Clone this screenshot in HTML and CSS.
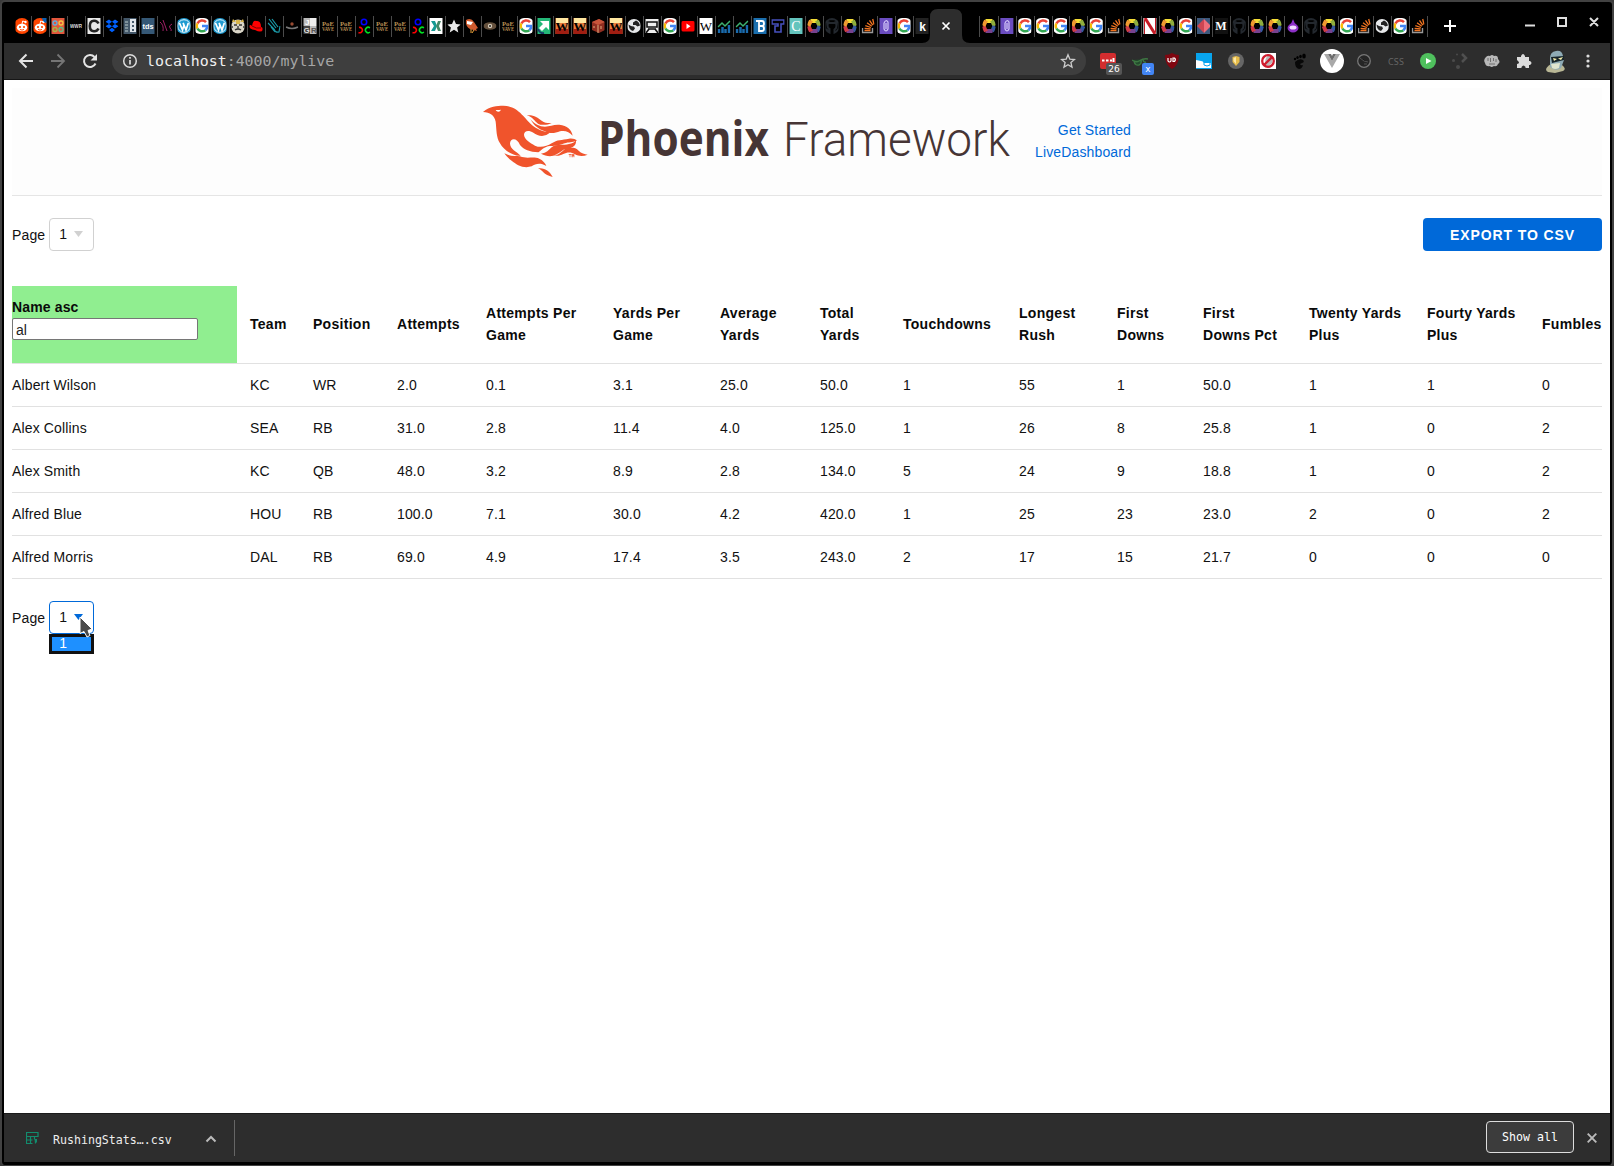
FILE: index.html
```html
<!DOCTYPE html>
<html lang="en">
<head>
<meta charset="utf-8">
<title>MyLive · Phoenix Framework</title>
<link rel="stylesheet" href="styles.css">
</head>
<body>
<svg class="defs" width="0" height="0" aria-hidden="true">
  <defs>
    <symbol id="reddit" viewBox="0 0 16 16"><circle cx="8" cy="8" r="8" fill="#ff4500"/><ellipse cx="8" cy="9.500" rx="5.200" ry="3.800" fill="#fff"/><circle cx="11.500" cy="4" r="1.200" fill="#fff"/><path d="M8 6l.7-3 2.800 1" stroke="#fff" fill="none"/><circle cx="6" cy="9" r="1.100" fill="#ff4500"/><circle cx="10" cy="9" r="1.100" fill="#ff4500"/><path d="M6 11.500q2 1.200 4 0" stroke="#ff4500" fill="none"/></symbol>
    <symbol id="reddit2" viewBox="0 0 16 16"><use href="#reddit"/><path d="M10 0h5v5q-4 0-5-5" fill="#0b5fb0"/></symbol>
    <symbol id="grid" viewBox="0 0 16 16"><path fill="#e2563c" d="M0 0h16v16H0z"/><circle cx="5" cy="5" r="2" fill="none" stroke="#5fb0e0" stroke-width="1.300"/><circle cx="11" cy="5" r="2" fill="none" stroke="#f5c542" stroke-width="1.300"/><circle cx="5" cy="11.500" r="2" fill="none" stroke="#a5b84a" stroke-width="1.300"/><circle cx="11" cy="11.500" r="2" fill="none" stroke="#5ac08a" stroke-width="1.300"/></symbol>
    <symbol id="wwr" viewBox="0 0 16 16"><text x="8" y="10" font-size="6" font-weight="bold" text-anchor="middle" textLength="12" lengthAdjust="spacingAndGlyphs" fill="#ddd">WWR</text></symbol>
    <symbol id="cbox" viewBox="0 0 16 16"><path fill="#e8e8e8" d="M0 0h16v16H0z"/><path d="M12.500 5.500Q11 2.500 8 2.700 3.800 3 3.800 8t4.200 5.300q3 .2 4.500-2.800" fill="none" stroke="#222" stroke-width="2.600"/></symbol>
    <symbol id="dropbox" viewBox="0 0 16 16"><path fill="#0061ff" d="M5 1.500l3 2.200-3 2.300-3.500-2.300zM11 1.500l3.500 2.200L11 6 8 3.700zM5 6l3 2.300-3 2.200L1.500 8.300zM11 6l3.500 2.300-3.500 2.200-3-2.200zM8 9.700l3 2.200-3 2.300-3-2.300z"/></symbol>
    <symbol id="cols" viewBox="0 0 16 16"><path fill="#44586a" d="M0 0h16v16H0z"/><path fill="#dfe5ea" d="M8 1h6v13H8z"/><path d="M3 4h3M3 7h3M3 10h3M3 13h3" stroke="#bcc"/><path fill="#44586a" d="M10 3h2v2h-2zM10 7h2v2h-2zM10 11h2v2h-2z"/></symbol>
    <symbol id="tds" viewBox="0 0 16 16"><path fill="#355876" d="M0 0h16v16H0z"/><text x="8" y="10.500" font-size="7.500" font-weight="bold" text-anchor="middle" textLength="11" lengthAdjust="spacingAndGlyphs" fill="#fff">tds</text></symbol>
    <symbol id="pink" viewBox="0 0 16 16"><path d="M2 4q4 3 3 9M5 2l4 11M14 6q-4 2-2 4t1 3" stroke="#a02065" fill="none"/></symbol>
    <symbol id="wp" viewBox="0 0 16 16"><circle cx="8" cy="8" r="8" fill="#1f9bd1"/><circle cx="8" cy="8" r="6.300" fill="none" stroke="#fff" stroke-width=".9"/><path d="M3.500 5l3 7L8 7l2 5 2.300-7M7 5l1 2" stroke="#fff" stroke-width="1.700" fill="none"/></symbol>
    <symbol id="g" viewBox="0 0 16 16"><rect width="16" height="16" rx="6" fill="#fff"/><g fill="none" stroke-width="2.500"><path d="M12 4.200A5.300 5.300 0 0 0 3.400 5.500" stroke="#ea4335"/><path d="M3.400 5.500a5.300 5.300 0 0 0 0 5" stroke="#fbbc05"/><path d="M3.400 10.500a5.300 5.300 0 0 0 8 1.700" stroke="#34a853"/><path d="M11.400 12.200Q13.300 10.500 13.200 8H8" stroke="#4285f4"/></g></symbol>
    <symbol id="tiger" viewBox="0 0 16 16"><circle cx="8" cy="8.500" r="7" fill="#d9d5c7"/><path d="M3 1l3 3H2zM13 1l-3 3h4zM6 2h4v4H6z" fill="#d8b64d"/><path d="M4 7h3M9 7h3M8 8v3M5 12q3-2 6 0M1 9h2M13 9h2" stroke="#333" stroke-width="1.300" fill="none"/></symbol>
    <symbol id="redhat" viewBox="0 0 16 16"><path d="M4 8q1-6 4-5 5-1 5 6 3 1 2 3-2 3-8 0-6-1-6-4 1-2 3 0z" fill="#f00"/><path d="M4 8q4 3 9 2" stroke="#700" fill="none"/></symbol>
    <symbol id="hand" viewBox="0 0 16 16"><path d="M3 1l7 9M6 1l6 8M2 5l6 6q1 4 5 3l1-6M5 9l4 5" stroke="#1a98a6" stroke-width="1.200" fill="none"/></symbol>
    <symbol id="dim" viewBox="0 0 16 16"><path d="M2 9q6 3 12 0" stroke="#777" stroke-width="1.500" fill="none"/><circle cx="8" cy="6" r="1.700" fill="#984b32"/></symbol>
    <symbol id="jgr" viewBox="0 0 16 16"><path fill="#bbb" d="M0 0h8v8H0zM8 8h8v8H8z"/><path fill="#444" d="M0 8h8v8H0z"/><path fill="#eee" d="M8 0h8v8H8z"/><g font-size="8" font-weight="bold"><text x="3" y="7" fill="#fff">J</text><text x="1.500" y="15" fill="#ddd">G</text><text x="9" y="15" fill="#555">R</text></g></symbol>
    <symbol id="poe" viewBox="0 0 16 16"><g font-family="Liberation Serif,serif" font-size="7" font-weight="bold" fill="#b98f55"><text x="2" y="8" textLength="12" lengthAdjust="spacingAndGlyphs">PoE</text><text x="2" y="12.500" textLength="12" lengthAdjust="spacingAndGlyphs">VAVE</text></g></symbol>
    <symbol id="circles" viewBox="0 0 16 16"><g fill="none" stroke-width="1.600"><circle cx="8" cy="4" r="2.700" stroke="#00f"/><path d="M3 9.500a2.700 2.700 0 1 1-.5 5" stroke="#f00"/><path d="M14 10a2.700 2.700 0 1 0 0 4" stroke="#0d2"/></g></symbol>
    <symbol id="x" viewBox="0 0 16 16"><path fill="#fff" d="M0 0h16v16H0z"/><path d="M3 3h4l2 5-2 5H3l3-5z" fill="#159a93"/><path d="M13 3h-3L8 8l2 5h3l-2-5z" fill="#486"/></symbol>
    <symbol id="star" viewBox="0 0 16 16"><path d="M8 1.500l2 4.500 4.800.4-3.700 3.200 1.200 4.800L8 11.800l-4.300 2.600 1.200-4.800L1.200 6.400 6 6z" fill="#e8e8e8"/></symbol>
    <symbol id="owl" viewBox="0 0 16 16"><path d="M2 2q5-3 8 2l4 6-2 1 1 2-7-2Q1 8 2 2z" fill="#cf5b2e"/><path d="M3 3l6 1-2 3-4-1z" fill="#fff"/><path d="M7 11v4M10 12l-2 3" stroke="#eba33a"/></symbol>
    <symbol id="eye" viewBox="0 0 16 16"><ellipse cx="8" cy="8" rx="6.500" ry="3.800" fill="#65513d"/><circle cx="8" cy="8" r="2.200" fill="#d4c9b8"/><circle cx="8" cy="8" r="1" fill="#222"/></symbol>
    <symbol id="green" viewBox="0 0 16 16"><path fill="#24b878" d="M0 0h16v16H0z"/><path d="M4 3h9v9l-3-3-4 4-3-3 4-4z" fill="#fff"/><path d="M2 11q2 5 6 4M1 8v5" stroke="#173a68" stroke-width="2" fill="none"/></symbol>
    <symbol id="w" viewBox="0 0 16 16"><path fill="#eb7d3d" d="M0 0h16v16H0z"/><path fill="#ffe7a0" d="M2 0h12v5H2z"/><path fill="#a01e12" d="M1 11h14v5H1z"/><text x="8" y="13" font-family="Liberation Serif,serif" font-size="13" font-weight="bold" text-anchor="middle">W</text></symbol>
    <symbol id="dice" viewBox="0 0 16 16"><path d="M2 4l7-3 6 3v8l-6 3-7-3z" fill="#8f2d20"/><path d="M2 4l7-3 6 3-7 3z" fill="#c7543b"/><path d="M8 7v8M4 8v2M11 8v3" stroke="#e2b080"/></symbol>
    <symbol id="globe" viewBox="0 0 16 16"><circle cx="8" cy="8" r="7" fill="#e6e8ea"/><path d="M2.500 6.500q3 2.500 5.500 2l1 2-2 2.500q-4-1-4.500-6.500zM7 4.500l3-2q3 1 4 5l-2.500 1-2-1.500L7 7z" fill="#222"/></symbol>
    <symbol id="train" viewBox="0 0 16 16"><path fill="#eee" d="M1 1h14v14H1z"/><path d="M3 4h10v5H3zM4 11h8M2 15l3-4M14 15l-3-4" stroke="#111" stroke-width="1.600" fill="none"/></symbol>
    <symbol id="yt" viewBox="0 0 16 16"><rect x="1" y="3" width="14" height="10.500" rx="2" fill="#f00"/><path d="M6.500 5.500l4 2.700-4 2.700z" fill="#fff"/></symbol>
    <symbol id="wiki" viewBox="0 0 16 16"><path fill="#fff" d="M0 0h16v16H0z"/><text x="8" y="12.500" font-family="Liberation Serif,serif" font-size="13" text-anchor="middle">W</text></symbol>
    <symbol id="chart" viewBox="0 0 16 16"><path d="M3 15v-4M6.500 15V9M9.500 15v-4M13 15V7" stroke="#1a6bad" stroke-width="2.500"/><path d="M2 9l4-4 3 3 5-5" stroke="#3db270" stroke-width="1.500" fill="none"/></symbol>
    <symbol id="b" viewBox="0 0 16 16"><path fill="#1b6fae" d="M0 0h16v16H0z"/><path d="M4 3h6q2 0 2 2.500T10 8q2 0 2 2.500T10 13H7V4M7 8h3" stroke="#fff" stroke-width="1.800" fill="none"/></symbol>
    <symbol id="t" viewBox="0 0 16 16"><path d="M2 2h12v4h-3v8H5V8h3V6H2z" fill="none" stroke="#4650bd" stroke-width="1.600"/></symbol>
    <symbol id="c" viewBox="0 0 16 16"><path fill="#63c4bd" d="M0 0h16v16H0z"/><text x="8" y="13" font-family="Liberation Serif,serif" font-size="14" text-anchor="middle" fill="#fff">C</text></symbol>
    <symbol id="hex" viewBox="0 0 16 16"><g fill="none" stroke-width="4"><path d="M4.500 3h7" stroke="#f5dd36"/><path d="M11 2.500L13.500 8" stroke="#8fae3d"/><path d="M13.500 8L11 13.500" stroke="#3558a0"/><path d="M11.500 13h-7" stroke="#76418e"/><path d="M5 13.500L2.500 8" stroke="#cf3c48"/><path d="M2.500 8L5 2.500" stroke="#ef9a30"/></g></symbol>
    <symbol id="github" viewBox="0 0 16 16"><path d="M8 1a7 7 0 0 0-2.500 13.500v-2Q3 13 2.500 11M8 1a7 7 0 0 1 2.500 13.500v-3Q13 10 12.300 6.500L12 4l-2 1H6L4 4l-.3 2.500Q3 10 5.500 11v3" fill="none" stroke="#23282e" stroke-width="2"/></symbol>
    <symbol id="so" viewBox="0 0 16 16"><path d="M2.500 10v4.500h10V10" fill="none" stroke="#999" stroke-width="1.400"/><path d="M4.500 12.500h6M4.600 10.300l6 .6M5.300 7.600l5.600 1.900M7 4.800l4.800 3.500M9.500 2.300l3.300 4.900M12.700 1l1.300 5.500" stroke="#f27420" stroke-width="1.300"/></symbol>
    <symbol id="clip" viewBox="0 0 16 16"><path fill="#6a4cc0" d="M0 0h16v16H0z"/><path d="M6 5v6q2 4 4 0V4Q8 1 6 5M8 5v6" fill="none" stroke="#d4c8f8" stroke-width="1.200"/></symbol>
    <symbol id="k" viewBox="0 0 16 16"><path fill="#222" d="M0 0h16v16H0z"/><text x="8.500" y="12.500" font-size="12" font-weight="bold" text-anchor="middle" fill="#fff">k</text></symbol>
    <symbol id="n" viewBox="0 0 16 16"><path fill="#fff" d="M0 0h16v16H0z"/><path d="M3 0l10 16" stroke="#c51a25" stroke-width="3"/><path d="M2.500 2v14M13.500 0v14" stroke="#c51a25"/></symbol>
    <symbol id="arrows" viewBox="0 0 16 16"><path fill="#3d587c" d="M0 0h16v16H0z"/><path d="M8 1l7 7-7 7V1z" fill="#ef6e7a"/><path d="M8 1v14L1 8z" fill="#ce4652"/></symbol>
    <symbol id="m" viewBox="0 0 16 16"><path fill="#111" d="M0 0h16v16H0z"/><text x="8" y="12" font-family="Liberation Serif,serif" font-size="12" font-weight="bold" text-anchor="middle" fill="#fff">M</text></symbol>
    <symbol id="drop" viewBox="0 0 16 16"><path d="M8 1q1 4 4 6 3 3 0 6-4 3-8 0-3-3 0-6 3-2 4-6z" fill="#8c2fc6"/><ellipse cx="8" cy="9.500" rx="3.500" ry="2" fill="#f3dcff"/></symbol>
  </defs>
</svg>
<div class="window">
  <div class="tabstrip">
    <div class="tabs">
      <i class="tab"><svg><use href="#reddit"/></svg></i><i class="tab"><svg><use href="#reddit2"/></svg></i><i class="tab"><svg><use href="#grid"/></svg></i><i class="tab"><svg><use href="#wwr"/></svg></i><i class="tab"><svg><use href="#cbox"/></svg></i><i class="tab"><svg><use href="#dropbox"/></svg></i><i class="tab"><svg><use href="#cols"/></svg></i><i class="tab"><svg><use href="#tds"/></svg></i><i class="tab"><svg><use href="#pink"/></svg></i><i class="tab"><svg><use href="#wp"/></svg></i>
      <i class="tab"><svg><use href="#g"/></svg></i><i class="tab"><svg><use href="#wp"/></svg></i><i class="tab"><svg><use href="#tiger"/></svg></i><i class="tab"><svg><use href="#redhat"/></svg></i><i class="tab"><svg><use href="#hand"/></svg></i><i class="tab"><svg><use href="#dim"/></svg></i><i class="tab"><svg><use href="#jgr"/></svg></i><i class="tab"><svg><use href="#poe"/></svg></i><i class="tab"><svg><use href="#poe"/></svg></i><i class="tab"><svg><use href="#circles"/></svg></i>
      <i class="tab"><svg><use href="#poe"/></svg></i><i class="tab"><svg><use href="#poe"/></svg></i><i class="tab"><svg><use href="#circles"/></svg></i><i class="tab"><svg><use href="#x"/></svg></i><i class="tab"><svg><use href="#star"/></svg></i><i class="tab"><svg><use href="#owl"/></svg></i><i class="tab"><svg><use href="#eye"/></svg></i><i class="tab"><svg><use href="#poe"/></svg></i><i class="tab"><svg><use href="#g"/></svg></i><i class="tab"><svg><use href="#green"/></svg></i>
      <i class="tab"><svg><use href="#w"/></svg></i><i class="tab"><svg><use href="#w"/></svg></i><i class="tab"><svg><use href="#dice"/></svg></i><i class="tab"><svg><use href="#w"/></svg></i><i class="tab"><svg><use href="#globe"/></svg></i><i class="tab"><svg><use href="#train"/></svg></i><i class="tab"><svg><use href="#g"/></svg></i><i class="tab"><svg><use href="#yt"/></svg></i><i class="tab"><svg><use href="#wiki"/></svg></i><i class="tab"><svg><use href="#chart"/></svg></i>
      <i class="tab"><svg><use href="#chart"/></svg></i><i class="tab"><svg><use href="#b"/></svg></i><i class="tab"><svg><use href="#t"/></svg></i><i class="tab"><svg><use href="#c"/></svg></i><i class="tab"><svg><use href="#hex"/></svg></i><i class="tab"><svg><use href="#github"/></svg></i><i class="tab"><svg><use href="#hex"/></svg></i><i class="tab"><svg><use href="#so"/></svg></i><i class="tab"><svg><use href="#clip"/></svg></i><i class="tab"><svg><use href="#g"/></svg></i><i class="tab last"><svg><use href="#k"/></svg></i>
    </div>
    <div class="tab-active"><svg width="48" height="34" viewBox="0 0 48 34"><path d="M0 34q8 0 8-8V8q0-8 8-8h16q8 0 8 8v18q0 8 8 8z" fill="#2d2d2d"/><path d="M20.500 13.500l7 7m0-7l-7 7" stroke="#fff" stroke-width="1.700"/></svg></div>
    <div class="tabs after">
      <i class="tab"><svg><use href="#hex"/></svg></i><i class="tab"><svg><use href="#clip"/></svg></i><i class="tab"><svg><use href="#g"/></svg></i><i class="tab"><svg><use href="#g"/></svg></i><i class="tab"><svg><use href="#g"/></svg></i><i class="tab"><svg><use href="#hex"/></svg></i><i class="tab"><svg><use href="#g"/></svg></i><i class="tab"><svg><use href="#so"/></svg></i><i class="tab"><svg><use href="#hex"/></svg></i><i class="tab"><svg><use href="#n"/></svg></i>
      <i class="tab"><svg><use href="#hex"/></svg></i><i class="tab"><svg><use href="#g"/></svg></i><i class="tab"><svg><use href="#arrows"/></svg></i><i class="tab"><svg><use href="#m"/></svg></i><i class="tab"><svg><use href="#github"/></svg></i><i class="tab"><svg><use href="#hex"/></svg></i><i class="tab"><svg><use href="#hex"/></svg></i><i class="tab"><svg><use href="#drop"/></svg></i><i class="tab"><svg><use href="#github"/></svg></i><i class="tab"><svg><use href="#hex"/></svg></i>
      <i class="tab"><svg><use href="#g"/></svg></i><i class="tab"><svg><use href="#so"/></svg></i><i class="tab"><svg><use href="#globe"/></svg></i><i class="tab"><svg><use href="#g"/></svg></i><i class="tab"><svg><use href="#so"/></svg></i>
    </div>
    <svg class="newtab" width="12" height="12" viewBox="0 0 12 12"><path d="M6 0v12M0 6h12" stroke="#fff" stroke-width="2"/></svg>
    <svg class="winctl" width="76" height="12" viewBox="0 0 76 12"><g fill="none" stroke="#dedede" stroke-width="2"><path d="M0 9.500h10M33 2h8v8h-8zM65 2l8 8m0-8l-8 8"/></g></svg>
  </div>
  <div class="toolbar">
    <div class="nav">
      <svg width="16" height="16" viewBox="0 0 16 16"><path d="M15 8H2m6.500-6.500L2 8l6.500 6.500" fill="none" stroke="#e4e4e4" stroke-width="2"/></svg>
      <svg width="16" height="16" viewBox="0 0 16 16"><path d="M1 8h13M7.500 1.500L14 8l-6.500 6.500" fill="none" stroke="#757575" stroke-width="1.800"/></svg>
      <svg width="16" height="16" viewBox="0 0 16 16"><path d="M13.500 10.500a6 6 0 1 1-1-6.500" fill="none" stroke="#e4e4e4" stroke-width="2"/><path d="M15 1v6.500H8.500z" fill="#e4e4e4"/></svg>
    </div>
    <div class="omnibox">
      <svg width="16" height="16" viewBox="0 0 16 16"><circle cx="8" cy="8" r="6.300" fill="none" stroke="#ddd" stroke-width="1.500"/><path d="M8 7v4.500M8 4v1.700" stroke="#ddd" stroke-width="1.700"/></svg>
      <span class="url"><b>localhost</b>:4000/mylive</span>
      <svg width="16" height="16" viewBox="0 0 16 16"><path d="M8 1.800l1.800 4.300 4.700.4-3.600 3 1.100 4.600L8 11.700l-4 2.400 1.100-4.600-3.600-3 4.700-.4z" fill="none" stroke="#ccc" stroke-width="1.300"/></svg>
    </div>
    <div class="exts">
      <div class="ext"><svg width="16" height="16" viewBox="0 0 16 16"><rect width="16" height="16" rx="2" fill="#d32d2f"/><path d="M2 7.500h2.500M6 7.500h2.500M10 7.500h2M13.500 5v4" stroke="#fff" stroke-width="2"/></svg><span class="badge">26</span></div>
      <div class="ext"><svg width="16" height="16" viewBox="0 0 16 16"><path d="M0 7q4 3 7 1 5-3 9-2M2 8q1 5 5 4 3-1 2-5M11 7q1 3 3 2" stroke="#3e7743" stroke-width="1.400" fill="#234b2c"/></svg><span class="badge blue">x</span></div>
      <div class="ext"><svg width="16" height="16" viewBox="0 0 16 16"><path d="M8 0q3 2 7 2 0 10-7 14Q1 12 1 2q4 0 7-2z" fill="#800610"/><path d="M4 5v3q1.500 2 3 0V5M9 5h1.500q1.700 1.700 0 3.500H9z" stroke="#fff" stroke-width="1.200" fill="none"/></svg></div>
      <div class="ext"><svg width="16" height="16" viewBox="0 0 16 16"><path fill="#08a5ee" d="M0 0h16v16H0z"/><path d="M0 7l5 1q2 0 3 2h7v5H0z" fill="#fff"/><path d="M8 8v4q3 2 6 0V8" stroke="#08a5ee" fill="none"/></svg></div>
      <div class="ext"><svg width="16" height="16" viewBox="0 0 16 16"><circle cx="8" cy="8" r="8" fill="#666"/><path d="M4.500 4L8 3l3.500 1v5L8 13 4.500 9z" fill="#e7bd4b"/><path d="M5.500 5L8 4v7L5.500 8z" fill="#ffe9a4"/></svg></div>
      <div class="ext"><svg width="16" height="16" viewBox="0 0 16 16"><path fill="#fff" d="M0 0h16v16H0z"/><path d="M5 10q0-6 4-8 4 2 3 8l-5 4z" fill="#bbb"/><circle cx="8" cy="8" r="5.800" stroke="#cf1c2e" stroke-width="2.300" fill="none"/><path d="M12.500 3.500l-9 9" stroke="#cf1c2e" stroke-width="2.300"/></svg></div>
      <div class="ext"><svg width="16" height="16" viewBox="0 0 16 16"><path d="M3 9q4-4 8-2 2 2-1 3l-2 1q1 2 3 1-1 4-4 4-4-1-4-7z" fill="#080808"/><ellipse cx="3" cy="6" rx="1.200" ry="1.300"/><ellipse cx="5.500" cy="4.500" rx="1.200" ry="1.500"/><ellipse cx="8.500" cy="3.500" rx="1.300" ry="1.700"/><ellipse cx="12" cy="3" rx="1.800" ry="2.500"/></svg></div>
      <div class="ext"><svg width="24" height="24" viewBox="0 0 24 24"><circle cx="12" cy="12" r="12" fill="#fff"/><path d="M4 5h4l4 7 4-7h4l-8 14z" fill="#a9a9a9"/><path d="M8 5h3l1 2 1-2h3l-4 7z" fill="#6d6d6d"/></svg></div>
      <div class="ext"><svg width="16" height="16" viewBox="0 0 16 16"><circle cx="8" cy="8" r="6.300" fill="#252525" stroke="#777" stroke-width="1.300"/><path d="M4 5l4 3 4 1M8 11h3" stroke="#555"/></svg></div>
      <div class="ext css">CSS</div>
      <div class="ext"><svg width="16" height="16" viewBox="0 0 16 16"><circle cx="8" cy="8" r="8" fill="#4fc05d"/><path d="M6 5l5.500 3L6 11z" fill="#fff"/></svg></div>
      <div class="ext"><svg width="16" height="16" viewBox="0 0 16 16"><g fill="#4b4b4b"><circle cx="1.500" cy="7.500" r="1.500"/><circle cx="5" cy="1.500" r="1"/><circle cx="6" cy="14" r="2"/></g><path d="M10 1l4 4-4 4" fill="none" stroke="#505050" stroke-width="2.500"/></svg></div>
      <div class="ext"><svg width="16" height="16" viewBox="0 0 16 16"><path d="M2 4q2-2 4-1 2-2 4 0 4-1 4 3 3 3 0 5-1 3-4 2-3 2-4 0-4 1-5-3-2-3 1-6z" fill="#b8b8b8"/><path d="M4 5v3M6.500 5v4M9.500 5v3M12 6v3M5 11h6" fill="none" stroke="#666" stroke-width=".9"/></svg></div>
      <div class="ext"><svg width="16" height="16" viewBox="0 0 16 16"><path d="M1 4h4V3q2-4 4 0v1h4v4h1q3 2 0 4h-1v3H9.500v-1q-2-3-4 0v1H1v-4q4-1 0-4z" fill="#dcdcdc"/></svg></div>
      <div class="ext"><svg width="22" height="23" viewBox="0 0 22 23"><path d="M3 22q-5-3 3-8l11 1q5 4 1 6l-8 2z" fill="#b9b795"/><path d="M5 17V8q0-6 6-7t7 5l1 4-3 8q-5 4-11-1z" fill="#8eabb5"/><path d="M6 7l13-1v4L7 13z" fill="#17252a"/><path d="M8 8l4 1-3 2zM13 8.500L18 7l-2 3z" fill="#f3ecaa"/><path d="M6 14l9-1-1 5q-4 2-7 0z" fill="#dfe5cf"/></svg></div>
      <div class="ext menu"><svg width="4" height="14" viewBox="0 0 4 14"><g fill="#ddd"><circle cx="2" cy="2" r="1.600"/><circle cx="2" cy="7" r="1.600"/><circle cx="2" cy="12" r="1.600"/></g></svg></div>
    </div>
  </div>
  <div class="page">
    <header class="site-header">
      <svg class="logo" width="532" height="76" viewBox="0 0 532 76">
        <g transform="translate(-12 -14) scale(.33333)" fill="#f0542c">
          <path d="M39 66C60 48 80 47 100 47C130 48 145 62 160 78C175 95 190 112 210 120C222 125 232 126 241 127C226 142 205 140 190 128C178 120 162 120 162 135C164 150 180 158 195 167C210 174 230 170 245 160C262 148 275 151 297 146C308 144 316 148 321 151C312 158 300 156 288 159C270 164 260 168 240 168C222 170 215 180 205 187C180 186 160 178 150 165C142 144 122 142 120 160C120 178 140 185 152 197C130 200 100 180 90 160C78 140 80 120 77 95C73 75 60 68 39 66z"/>
          <path d="M170 76C192 74 203 83 215 92C225 99 235 100 245 99C232 106 212 106 204 101C192 93 190 82 170 76zM181 88C195 103 208 110 225 110C240 109 250 103 268 104C292 107 304 118 308 137C298 126 285 120 270 124C255 130 240 132 224 124C205 117 195 110 181 88z"/>
          <path d="M213 191C230 189 236 180 245 172C260 160 280 167 297 162C306 160 314 158 318 151C320 166 308 174 294 175C275 176 270 196 240 199C230 198 222 196 213 191zM252 196C270 196 278 180 290 175C305 170 318 174 326 182C334 191 344 192 353 194C340 200 325 199 315 193C302 184 290 187 280 192C270 197 262 199 252 196z"/>
          <path d="M103 190C120 200 137 196 150 199C172 208 190 198 208 206C220 212 226 220 229 228C210 217 196 222 185 229C160 237 140 224 125 212C114 204 108 198 103 190zM204 235C224 232 240 244 248 261C235 258 226 254 220 247C215 241 211 238 204 235z"/>
          <path d="M296 192h8v2h-3v8h-2v-8h-3zM305 192h3l1 4 1-4h3v10h-2v-6l-1 4-2-4v6h-3z"/>
          <path d="M77 60q8 1 16-1-3 7-9 6-6-1-7-5z" fill="#fff"/>
          <path d="M143 165C155 188 175 195 200 193" fill="none" stroke="#fcfcfc" stroke-width="3"/>
        </g>
        <g fill="#463535"><text class="wm-bold" x="116" y="52" textLength="171" lengthAdjust="spacingAndGlyphs">Phoenix</text><text class="wm-light" x="301" y="52" textLength="227" lengthAdjust="spacingAndGlyphs">Framework</text></g>
      </svg>
      <nav class="links"><a>Get Started</a><a>LiveDashboard</a></nav>
    </header>
    <div class="controls">
      <label class="pager">Page <span class="select">1<svg width="9" height="6" viewBox="0 0 9 6"><path d="M0 0h9L4.500 6z" fill="#d1d1d1"/></svg></span></label>
      <button class="export">Export to CSV</button>
    </div>
    <table>
      <colgroup><col class="c225"><col class="c63"><col class="c84"><col class="c89"><col class="c127"><col class="c107"><col class="c100"><col class="c83"><col class="c116"><col class="c98"><col class="c86"><col class="c106"><col class="c118"><col class="c115"><col></colgroup>
      <thead><tr><th class="sorted">Name asc<input value="al" spellcheck="false"></th><th>Team</th><th>Position</th><th>Attempts</th><th>Attempts Per<br>Game</th><th>Yards Per<br>Game</th><th>Average<br>Yards</th><th>Total<br>Yards</th><th>Touchdowns</th><th>Longest<br>Rush</th><th>First<br>Downs</th><th>First<br>Downs Pct</th><th>Twenty Yards<br>Plus</th><th>Fourty Yards<br>Plus</th><th>Fumbles</th></tr></thead>
      <tbody>
        <tr><td>Albert Wilson</td><td>KC</td><td>WR</td><td>2.0</td><td>0.1</td><td>3.1</td><td>25.0</td><td>50.0</td><td>1</td><td>55</td><td>1</td><td>50.0</td><td>1</td><td>1</td><td>0</td></tr>
        <tr><td>Alex Collins</td><td>SEA</td><td>RB</td><td>31.0</td><td>2.8</td><td>11.4</td><td>4.0</td><td>125.0</td><td>1</td><td>26</td><td>8</td><td>25.8</td><td>1</td><td>0</td><td>2</td></tr>
        <tr><td>Alex Smith</td><td>KC</td><td>QB</td><td>48.0</td><td>3.2</td><td>8.9</td><td>2.8</td><td>134.0</td><td>5</td><td>24</td><td>9</td><td>18.8</td><td>1</td><td>0</td><td>2</td></tr>
        <tr><td>Alfred Blue</td><td>HOU</td><td>RB</td><td>100.0</td><td>7.1</td><td>30.0</td><td>4.2</td><td>420.0</td><td>1</td><td>25</td><td>23</td><td>23.0</td><td>2</td><td>0</td><td>2</td></tr>
        <tr><td>Alfred Morris</td><td>DAL</td><td>RB</td><td>69.0</td><td>4.9</td><td>17.4</td><td>3.5</td><td>243.0</td><td>2</td><td>17</td><td>15</td><td>21.7</td><td>0</td><td>0</td><td>0</td></tr>
      </tbody>
    </table>
    <div class="pager bottom">Page <span class="select open">1<svg width="9" height="6" viewBox="0 0 9 6"><path d="M0 0h9L4.500 6z" fill="#0069d9"/></svg>
      <span class="option">1</span>
      <svg class="cursor" width="15" height="22" viewBox="0 0 15 22"><path d="M1 1v16.500l4-2 3 5.500 3-1.500-2-5 4-1.500z" fill="#4a4a4a" stroke="#fff"/></svg></span></div>
  </div>
  <div class="downloads">
    <svg width="13" height="13" viewBox="0 0 13 13"><path d="M.5.500h11.500v4H.5zM.5 4.500v7h6M.5 8h6M4.500 4.500v7M8.500 4.500v3" fill="none" stroke="#128c6e" stroke-width="1.200"/><path d="M8.500 7h2.500v3l-2 2z" fill="#128c6e"/></svg>
    <span class="file">RushingStats….csv</span>
    <svg class="chev" width="12" height="8" viewBox="0 0 12 8"><path d="M1.500 6.500L6 2l4.500 4.500" fill="none" stroke="#bbb" stroke-width="2"/></svg>
    <span class="rule"></span>
    <span class="showall">Show all</span>
    <svg width="10" height="10" viewBox="0 0 10 10"><path d="M.7.700l8.600 8.600m0-8.600L.7 9.300" stroke="#bbb" stroke-width="1.900"/></svg>
  </div>
</div>
</body>
</html>
```
FILE: styles.css
```css
* { box-sizing: border-box; }
html, body { height: 100%; }
body {
  margin: 0;
  background: #3a3a3a;
  font: 14px/22px "Liberation Sans", Arial, sans-serif;
  letter-spacing: .01em;
  color: #111;
  overflow: hidden;
}
svg { display: block; flex: none; }
.defs { position: absolute; }

.window {
  height: 1166px;
  border: 2px solid #424242;
  border-bottom-width: 1px;
  padding: 0 2px 3px;
  border-radius: 5px;
  background: #000;
  display: flex;
  flex-direction: column;
}

/* Tab strip */
.tabstrip { height: 41px; display: flex; align-items: flex-start; padding-left: 10px; flex: none; letter-spacing: 0; }
.tabs { display: flex; padding-top: 14px; }
.tab { flex: none; width: 18px; height: 21px; border-right: 1px solid #4b4b4b; padding-top: 2px; font-style: normal; }
.tab svg { width: 16px; height: 16px; clip-path: inset(0 1.5px); }
.tab.last { border-right: 0; width: 17px; }
.tab-active { margin: 7px 0 0 -9px; width: 48px; }
.after { margin-left: 9px; }
.after::before { content: ""; width: 1px; height: 21px; background: #4b4b4b; margin-right: 1px; }
.after .tab { width: 17.88px; }
.newtab { margin: 18px 0 0 16px; }
.winctl { margin: 14px 9px 0 auto; }

/* Toolbar */
.toolbar { height: 37px; flex: none; background: #2d2d2d; border-bottom: 1px solid #161616; display: flex; align-items: center; }
.nav { display: flex; gap: 16px; padding-left: 14px; width: 108px; }
.omnibox { width: 974px; height: 28px; border-radius: 14px; background: #3e3e3e; display: flex; align-items: center; padding: 0 10px; }
.url { flex: 1; margin: -1px 0 0 8px; font: 14.9px "DejaVu Sans Mono", monospace; letter-spacing: 0; color: #a6a6a6; }
.url b { font-weight: normal; color: #f0f0f0; }
.exts { display: flex; margin-left: 6px; }
.ext { width: 32px; height: 24px; display: flex; align-items: center; justify-content: center; position: relative; }
.badge { position: absolute; left: 14px; top: 14px; width: 16px; height: 12px; border-radius: 2px; background: #555; color: #fff; font: 9px/12px "DejaVu Sans", sans-serif; text-align: center; }
.badge.blue { background: #4285f4; width: 12px; left: 18px; }
.css { font: 9px "Noto Sans", sans-serif; color: #666; }

/* Page */
.page { flex: 1; background: #fff; padding: 8px 8px 0; }
.site-header { height: 108px; background: #fdfdfd; border-bottom: 1px solid #e5e5e5; display: flex; padding-left: 470px; }
.logo { margin-top: 16px; overflow: visible; }
.wm-bold { font: bold 47.5px "Open Sans", sans-serif; letter-spacing: 0; }
.wm-light { font: 300 48px Roboto, sans-serif; letter-spacing: 0; }
.links { width: 117px; padding-top: 31px; display: flex; flex-direction: column; align-items: flex-end; color: #0069d9; }
.controls { display: flex; justify-content: space-between; align-items: center; margin-top: 22px; height: 33px; }
.pager { display: flex; align-items: center; white-space: pre; height: 33px; padding-top: 1px; }
.select { position: relative; width: 45px; height: 33px; margin-top: -1px; border: 1px solid #d1d1d1; border-radius: 4px; padding: 0 10px 2px 9px; display: flex; align-items: center; justify-content: space-between; }
.select.open { border-color: #0069d9; }
.export { width: 179px; height: 33px; border: 0; border-radius: 4px; background: #0069d9; color: #fff; font: bold 14px/33px "Liberation Sans", Arial, sans-serif; letter-spacing: .9px; text-transform: uppercase; padding: 1px 0 0; }

table { width: 1590px; table-layout: fixed; border-collapse: separate; border-spacing: 0; margin-top: 35px; }
.c225 { width: 225px; } .c63 { width: 63px; } .c84 { width: 84px; } .c89 { width: 89px; } .c127 { width: 127px; }
.c107 { width: 107px; } .c100 { width: 100px; } .c83 { width: 83px; } .c116 { width: 116px; } .c98 { width: 98px; }
.c86 { width: 86px; } .c106 { width: 106px; } .c118 { width: 118px; } .c115 { width: 115px; }
th, td { text-align: left; padding: 0 0 0 13px; border-bottom: 1px solid #e1e1e1; white-space: nowrap; }
th:first-child, td:first-child { padding-left: 0; }
th { height: 78px; padding-bottom: 2px; color: #0a0a0a; letter-spacing: .02em; }
td { height: 43px; }
th.sorted { background: #90ee90; vertical-align: top; padding-top: 10px; letter-spacing: .01em; }
th input { display: block; width: 186px; height: 22px; border: 1px solid #767676; border-radius: 2px; padding: 2px 3px 0; font: 14px "Liberation Sans", Arial, sans-serif; background: #fff; color: #222; }
.bottom { margin-top: 22px; }
.option { position: absolute; left: -1px; top: 32px; width: 45px; height: 20px; border: 3px solid #111; background: #1e90ff; color: #fff; padding-left: 7px; line-height: 13px; }
.cursor { position: absolute; left: 29px; top: 14px; }

/* Downloads bar */
.downloads { height: 49px; flex: none; background: #2d2d2d; border-top: 1px solid #1b1b1b; display: flex; align-items: center; padding: 0 13px 0 22px; color: #eee; font: 11.6px "DejaVu Sans Mono", monospace; letter-spacing: 0; }
.file { margin: 3px 0 0 14px; width: 152px; }
.chev { margin-top: 2px; }
.rule { width: 1px; height: 36px; background: #666; margin-left: 17px; }
.showall { margin: -2px 13px 0 auto; width: 88px; height: 32px; border: 1px solid #ddd; border-radius: 4px; background: #3c3c3c; text-align: center; line-height: 30px; color: #fff; }
```
